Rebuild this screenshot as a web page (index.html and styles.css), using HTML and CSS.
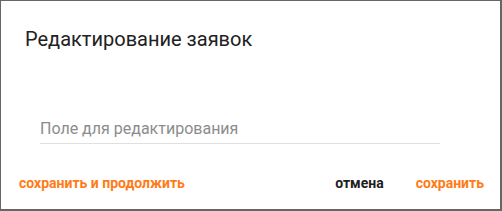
FILE: index.html
```html
<!DOCTYPE html>
<html lang="ru">
<head>
    <meta charset="UTF-8">
    <title>Редактирование заявок</title>
    <link rel="stylesheet" href="styles.css">
</head>
<body>
    <div class="dialog">
        <h2 class="dialog-title">Редактирование заявок</h2>
        <div class="dialog-content">
            <input class="field" type="text" placeholder="Поле для редактирования">
        </div>
        <div class="dialog-actions">
            <button class="btn btn-accent">сохранить и продолжить</button>
            <span class="spacer"></span>
            <button class="btn">отмена</button>
            <button class="btn btn-accent">сохранить</button>
        </div>
    </div>
</body>
</html>
```

FILE: styles.css
```css
body {
    margin: 0;
    font-family: Roboto, "Noto Sans", sans-serif;
    background: #fff;
}
.dialog {
    width: 502px;
    height: 211px;
    box-sizing: border-box;
    border: 1px solid #666;
    border-right-width: 2px;
    border-bottom-width: 2px;
    display: flex;
    flex-direction: column;
}
.dialog-title {
    margin: 0;
    padding: 24px 24px 0;
    font-size: 20px;
    font-weight: 400;
    line-height: 28px;
    color: #212121;
}
.dialog-content {
    padding: 0 60px 0 39px;
    margin-top: 62px;
}
.field {
    width: 100%;
    box-sizing: border-box;
    border: none;
    border-bottom: 1px solid #e0e0e0;
    padding: 4px 0 5px;
    font-family: inherit;
    font-size: 16px;
    color: #212121;
    outline: none;
}
.field::placeholder {
    color: #8c8c8c;
}
.dialog-actions {
    display: flex;
    align-items: center;
    padding: 0 8px 0 10px;
    margin-top: auto;
    margin-bottom: 10px;
}
.spacer {
    flex: 1;
}
.btn {
    background: none;
    border: none;
    font-family: inherit;
    font-size: 14px;
    font-weight: 700;
    color: #212121;
    padding: 8px;
    cursor: pointer;
}
.btn + .btn {
    margin-left: 16px;
}
.btn-accent {
    color: #ff7b17;
}
```
